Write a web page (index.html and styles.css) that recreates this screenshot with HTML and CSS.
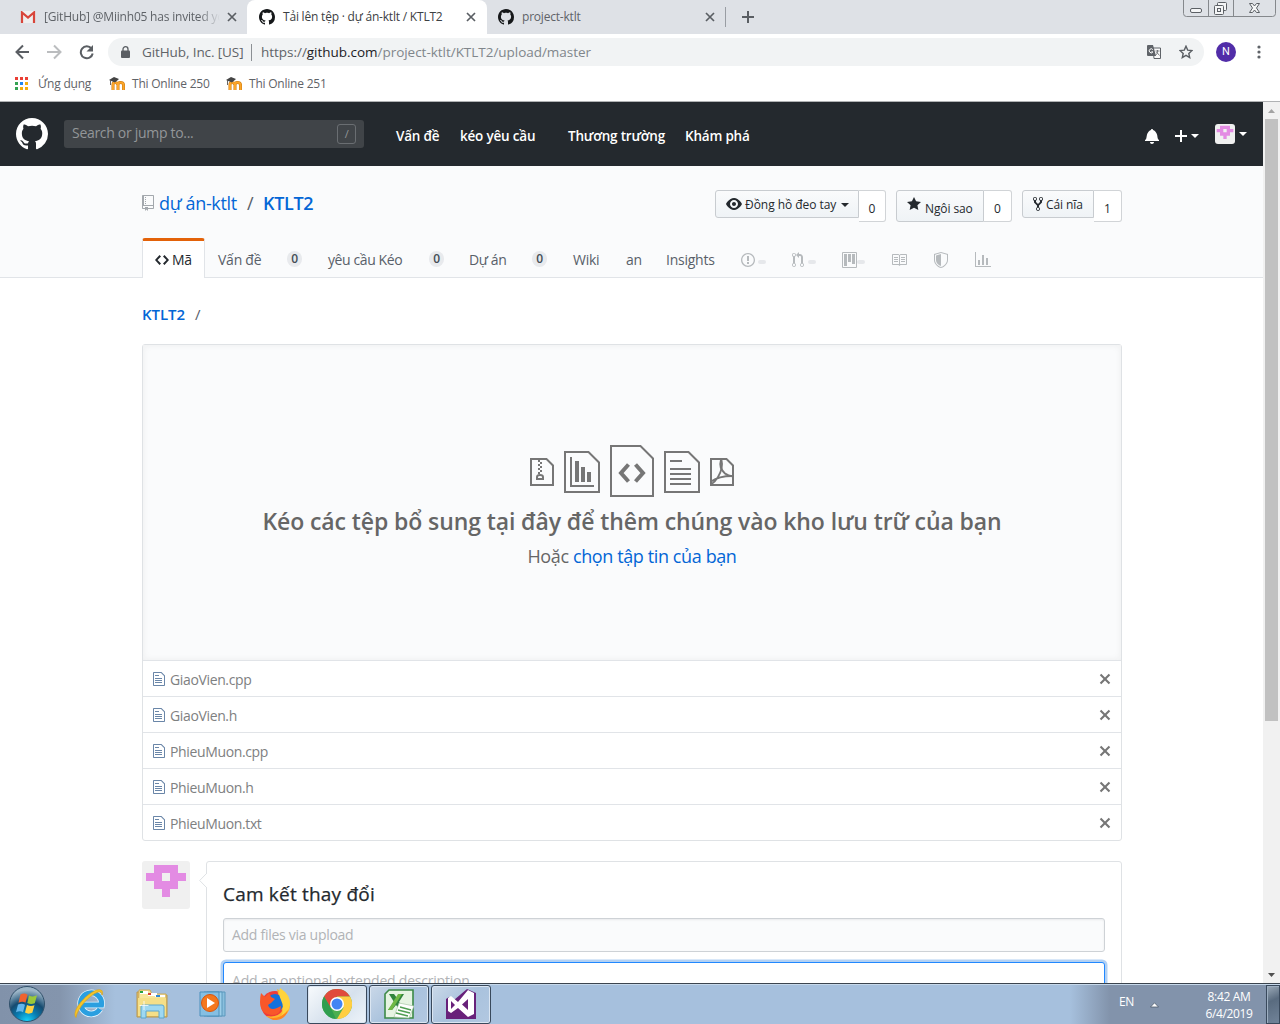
FILE: index.html
```html
<!DOCTYPE html>
<html lang="vi">
<head>
<meta charset="utf-8">
<title>Tải lên tệp · dự án-ktlt / KTLT2</title>
<link rel="stylesheet" href="styles.css">
</head>
<body>
<svg class="defs" width="0" height="0">
  <symbol id="mark" viewBox="0 0 16 16"><path d="M8 0C3.58 0 0 3.58 0 8c0 3.54 2.29 6.53 5.47 7.59.4.07.55-.17.55-.38 0-.19-.01-.82-.01-1.49-2.01.37-2.53-.49-2.69-.94-.09-.23-.48-.94-.82-1.13-.28-.15-.68-.52-.01-.53.63-.01 1.08.58 1.23.82.72 1.21 1.87.87 2.33.66.07-.52.28-.87.51-1.07-1.78-.2-3.64-.89-3.64-3.95 0-.87.31-1.59.82-2.15-.08-.2-.36-1.02.08-2.12 0 0 .67-.21 2.2.82.64-.18 1.32-.27 2-.27.68 0 1.36.09 2 .27 1.53-1.04 2.2-.82 2.2-.82.44 1.1.16 1.92.08 2.12.51.56.82 1.27.82 2.15 0 3.07-1.87 3.75-3.65 3.95.29.25.54.73.54 1.48 0 1.07-.01 1.93-.01 2.2 0 .21.15.46.55.38A8.013 8.013 0 0 0 16 8c0-4.42-3.58-8-8-8z"/></symbol>
  <symbol id="close" viewBox="0 0 10 10"><path d="M1 1l8 8M9 1L1 9" fill="none" stroke="currentColor" stroke-width="1.7"/></symbol>
  <symbol id="moodle" viewBox="0 0 16 14"><path d="M4 13V7.500q0-2 2-2t3 2V13M9 13V7.500q0-2 2.500-2t3 2V13" fill="none" stroke="#c9780f" stroke-width="3"/><path d="M4 13V7.500q0-2 2-2t3 2V13M9 13V7.500q0-2 2.500-2t3 2V13" fill="none" stroke="#fba52a" stroke-width="2"/><path d="M0 3l5-3 5 2-4 3.500-2-.8z" fill="#444"/><path d="M1.500 3v5" stroke="#555" stroke-width=".9"/></symbol>
  <symbol id="file" viewBox="0 0 12 16"><path d="M6 5H2V4h4v1zM2 8h7V7H2v1zm0 2h7V9H2v1zm0 2h7v-1H2v1zm10-7.500V14c0 .55-.45 1-1 1H1c-.55 0-1-.45-1-1V2c0-.55.45-1 1-1h7.500L12 4.500zM11 5L8 2H1v12h10V5z"/></symbol>
  <symbol id="cross" viewBox="0 0 12 16"><path d="M7.480 8l3.750 3.750-1.480 1.480L6 9.480l-3.750 3.750-1.480-1.480L4.520 8 .77 4.250l1.480-1.480L6 6.520l3.750-3.750 1.480 1.480L7.480 8z"/></symbol>
  <symbol id="identicon" viewBox="0 0 48 48"><path fill="#f0f0f0" d="M0 0h48v48H0z"/><path fill="#e38be3" fill-rule="evenodd" d="M12 4h24v8h8v8h-8v8h-8v8h-8v-8h-8v-8H4v-8h8zM20 12v8h8v-8z"/></symbol>
</svg>

<div class="tabstrip">
  <div class="tab tab-first">
    <svg class="gmail" width="16" height="12" viewBox="0 0 16 12"><path fill="#eee" d="M1 0h14v12H1z"/><path d="M2 12V1.500L8 6.500l6-5V12" fill="none" stroke="#d8453a" stroke-width="2.200"/></svg>
    <span class="tab-title faded">[GitHub] @Miinh05 has invited yo</span>
    <svg class="x" width="10" height="10"><use href="#close"/></svg>
  </div>
  <div class="tab tab-active">
    <svg width="16" height="16"><use href="#mark"/></svg>
    <span class="tab-title">Tải lên tệp · dự án-ktlt / KTLT2</span>
    <svg class="x" width="10" height="10"><use href="#close"/></svg>
  </div>
  <div class="tab tab-last">
    <svg width="16" height="16"><use href="#mark"/></svg>
    <span class="tab-title">project-ktlt</span>
    <svg class="x" width="10" height="10"><use href="#close"/></svg>
  </div>
  <svg class="newtab" width="12" height="12" viewBox="0 0 12 12"><path d="M6 0v12M0 6h12" stroke="#5a5e63" stroke-width="2"/></svg>
  <svg class="winctl" width="94" height="18" viewBox="0 0 94 18"><path d="M.5 0v13.500q0 3 3 3h86q3 0 3-3V0M25.500 0v16M50.500 0v16" fill="none" stroke="#85888c"/><g fill="#f4f5f6" stroke="#5c6065"><rect x="7.500" y="8.500" width="11" height="4" rx="1.500"/><rect x="34.500" y="2.500" width="9" height="8" rx="1"/><rect x="31.500" y="5.500" width="9" height="9" rx="1"/><rect x="34.500" y="8.500" width="3" height="3"/><path d="M66.500 3.500h3l2 2.500 2-2.500h3L73.500 8l3 4.500h-3l-2-2.500-2 2.500h-3l3-4.500z"/></g></svg>
</div>

<div class="toolbar">
  <svg class="nav-icons" width="80" height="16" viewBox="0 0 80 16"><g fill="none" stroke-width="2"><path d="M14 8H2M8 1.500L1.500 8 8 14.500" stroke="#5a5e63"/><path d="M32 8h13M39 1.500L45.500 8 39 14.500" stroke="#bbbdbf"/><path d="M76.500 4.500a6 6 0 1 0 1.200 5" stroke="#5a5e63"/></g><path d="M78 1v6.500h-6.500z" fill="#5a5e63"/></svg>
  <div class="omnibox">
    <svg class="lock" width="9" height="12" viewBox="0 0 9 12"><rect y="4.500" width="9" height="7.500" rx="1" fill="#5a5e63"/><path d="M2 5V3.200a2.500 2.500 0 0 1 5 0V5" fill="none" stroke="#5a5e63" stroke-width="1.300"/></svg>
    <span class="origin">GitHub, Inc. [US]</span>
    <span class="url"><i>https://</i><b>github.com</b>/project-ktlt/KTLT2/upload/master</span>
    <svg class="translate" width="14" height="14" viewBox="0 0 14 14"><path d="M6 3h7.500v10.500H7z" fill="#f8f8f8" stroke="#5f6368"/><path d="M1 0h5l3 11H1q-1 0-1-1V1q0-1 1-1z" fill="#5f6368"/><path d="M5.800 4.600a2 2 0 1 0 .1 2.300H4.300" stroke="#fff" fill="none"/><path d="M8.500 6h4M10.500 5v1q0 3-2 4.500M9.500 7l3 3.500" stroke="#5f6368" stroke-width=".8" fill="none"/></svg>
    <svg class="bookmark" width="14" height="14" viewBox="0 0 14 14"><path d="M7 1.200l1.700 3.900 4.300.4-3.200 2.900.9 4.200L7 10.400l-3.700 2.200.9-4.200L1 5.500l4.300-.4z" fill="none" stroke="#5a5e63" stroke-width="1.400"/></svg>
  </div>
  <span class="profile">N</span>
  <svg class="kebab" width="4" height="14" viewBox="0 0 4 14" fill="#5a5e63"><circle cx="2" cy="2" r="1.600"/><circle cx="2" cy="7" r="1.600"/><circle cx="2" cy="12" r="1.600"/></svg>
</div>

<div class="bookmarks">
  <svg width="13" height="13" viewBox="0 0 13 13"><path fill="#ea3f35" d="M0 0h3v3H0zM5 0h3v3H5zM10 0h3v3h-3z"/><path fill="#35a253" d="M0 5h3v3H0zM0 10h3v3H0z"/><path fill="#1f87f0" d="M5 5h3v3H5z"/><path fill="#f4ae0b" d="M10 5h3v3h-3zM5 10h3v3H5zM10 10h3v3h-3z"/></svg>
  <span class="bm-apps">Ứng dụng</span>
  <svg width="16" height="14"><use href="#moodle"/></svg>
  <span class="bm-link">Thi Online 250</span>
  <svg width="16" height="14"><use href="#moodle"/></svg>
  <span class="bm-link">Thi Online 251</span>
</div>

<div class="viewport">
  <div class="page">
    <header class="gh-header">
      <svg width="32" height="32" fill="#fff"><use href="#mark"/></svg>
      <div class="search"><span>Search or jump to...</span><kbd>/</kbd></div>
      <nav><a class="n1">Vấn đề</a><a class="n2">kéo yêu cầu</a><a class="n3">Thương trường</a><a class="n4">Khám phá</a></nav>
      <div class="header-right">
        <svg class="bell" width="14" height="16" viewBox="0 0 14 16"><path d="M14 12v1H0v-1l.73-.58c.77-.77.81-2.550 1.190-4.420C2.690 3.230 6 2 6 2c0-.55.45-1 1-1s1 .45 1 1c0 0 3.390 1.230 4.160 5 .38 1.880.42 3.660 1.190 4.420l.66.58H14zm-7 4c1.110 0 2-.89 2-2H5c0 1.110.89 2 2 2z"/></svg>
        <svg class="plus" width="12" height="16" viewBox="0 0 12 16"><path d="M12 9H7v5H5V9H0V7h5V2h2v5h5v2z"/></svg>
        <i class="caret low"></i>
        <svg class="me" width="20" height="20"><use href="#identicon"/></svg>
        <i class="caret"></i>
      </div>
    </header>

    <section class="repohead">
      <div class="repo-row">
        <h1>
          <svg class="repo" width="12" height="16" viewBox="0 0 12 16"><path d="M4 9H3V8h1v1zm0-3H3v1h1V6zm0-2H3v1h1V4zm0-2H3v1h1V2zm8-1v12c0 .55-.45 1-1 1H6v2l-1.500-1.500L3 16v-2H1c-.55 0-1-.45-1-1V1c0-.55.45-1 1-1h10c.55 0 1 .45 1 1zm-1 10H1v2h2v-1h3v1h5v-2zm0-10H2v9h9V1z"/></svg>
          <a class="owner">dự án-ktlt</a><span class="slash">/</span><a class="reponame">KTLT2</a>
        </h1>
        <div class="actions">
          <div class="action">
            <span class="btn watch"><svg width="16" height="16" viewBox="0 0 16 16"><path d="M8.060 2C3 2 0 8 0 8s3 6 8.060 6C13 14 16 8 16 8s-3-6-7.940-6zM8 12c-2.200 0-4-1.780-4-4 0-2.200 1.800-4 4-4 2.220 0 4 1.800 4 4 0 2.220-1.780 4-4 4zm2-4c0 1.110-.89 2-2 2-1.110 0-2-.89-2-2 0-1.110.89-2 2-2 1.110 0 2 .89 2 2z"/></svg><span>Đồng hồ đeo tay</span><i class="caret"></i></span><span class="count">0</span>
          </div>
          <div class="action">
            <span class="btn star"><svg width="14" height="16" viewBox="0 0 14 16"><path d="M14 6l-4.900-.64L7 1 4.900 5.360 0 6l3.600 3.260L2.670 14 7 11.670 11.330 14l-.93-4.740L14 6z"/></svg><span>Ngôi sao</span></span><span class="count">0</span>
          </div>
          <div class="action">
            <span class="btn fork"><svg width="10" height="16" viewBox="0 0 10 16"><path d="M8 1a1.993 1.993 0 0 0-1 3.720V6L5 8 3 6V4.720A1.993 1.993 0 0 0 2 1a1.993 1.993 0 0 0-1 3.720V6.500l3 3v1.780A1.993 1.993 0 0 0 5 15a1.993 1.993 0 0 0 1-3.720V9.500l3-3V4.720A1.993 1.993 0 0 0 8 1zM2 4.200C1.340 4.200.8 3.650.8 3c0-.65.55-1.200 1.200-1.200.65 0 1.200.55 1.200 1.200 0 .65-.55 1.200-1.200 1.200zm3 10c-.66 0-1.200-.55-1.200-1.200 0-.65.55-1.200 1.200-1.200.65 0 1.200.55 1.200 1.200 0 .65-.55 1.200-1.200 1.200zm3-10c-.66 0-1.200-.55-1.200-1.200 0-.65.55-1.200 1.200-1.200.65 0 1.200.55 1.200 1.200 0 .65-.55 1.200-1.200 1.200z"/></svg><span>Cái nĩa</span></span><span class="count">1</span>
          </div>
        </div>
      </div>
      <nav class="reponav">
        <a class="selected"><svg width="14" height="16" viewBox="0 0 14 16"><path d="M9.500 3L8 4.500 11.500 8 8 11.500 9.500 13 14 8 9.500 3zm-5 0L0 8l4.500 5L6 11.500 2.500 8 6 4.500 4.500 3z"/></svg><span>Mã</span></a>
        <a class="r1">Vấn đề</a><span class="counter c1">0</span>
        <a class="r2">yêu cầu Kéo</a><span class="counter c2">0</span>
        <a class="r3">Dự án</a><span class="counter c3">0</span>
        <a class="r4">Wiki</a><a class="r5">an</a><a class="r6">Insights</a>
        <span class="ghost g1"><svg width="14" height="16" viewBox="0 0 14 16"><path d="M7 2.300c3.140 0 5.700 2.560 5.700 5.700s-2.560 5.700-5.700 5.700A5.710 5.710 0 0 1 1.300 8c0-3.140 2.560-5.700 5.700-5.700zM7 1C3.140 1 0 4.140 0 8s3.140 7 7 7 7-3.140 7-7-3.140-7-7-7zm1 3H6v5h2V4zm0 6H6v2h2v-2z"/></svg><i></i></span>
        <span class="ghost g2"><svg width="12" height="16" viewBox="0 0 12 16"><path d="M11 11.280V5c-.03-.78-.34-1.470-.94-2.060C9.460 2.350 8.780 2.030 8 2H7V0L4 3l3 3V4h1c.27.02.48.11.69.31.21.2.3.42.31.69v6.280A1.993 1.993 0 0 0 10 15a1.993 1.993 0 0 0 1-3.720zm-1 2.920c-.66 0-1.200-.55-1.200-1.200 0-.65.55-1.200 1.200-1.200.65 0 1.200.55 1.200 1.200 0 .65-.55 1.200-1.200 1.200zM4 3c0-1.110-.89-2-2-2a1.993 1.993 0 0 0-1 3.720v6.560A1.993 1.993 0 0 0 2 15a1.993 1.993 0 0 0 1-3.720V4.720c.59-.34 1-.98 1-1.720zm-.8 10c0 .66-.55 1.200-1.200 1.200-.65 0-1.200-.55-1.200-1.200 0-.65.55-1.200 1.200-1.200.65 0 1.200.55 1.200 1.200zM2 4.200C1.340 4.200.8 3.650.8 3c0-.65.55-1.200 1.200-1.200.65 0 1.200.55 1.200 1.200 0 .65-.55 1.200-1.200 1.200z"/></svg><i></i></span>
        <span class="ghost g3"><svg width="15" height="16" viewBox="0 0 15 16"><path fill-rule="evenodd" d="M10 12h3V2h-3v10zm-4-2h3V2H6v8zm-4 4h3V2H2v12zm-1 1h13V1H1v14zM14 0H1a1 1 0 0 0-1 1v14a1 1 0 0 0 1 1h13a1 1 0 0 0 1-1V1a1 1 0 0 0-1-1z"/></svg><i></i></span>
        <span class="ghost g4"><svg width="16" height="16" viewBox="0 0 16 16"><path d="M3 5h4v1H3V5zm0 3h4V7H3v1zm0 2h4V9H3v1zm11-5h-4v1h4V5zm0 2h-4v1h4V7zm0 2h-4v1h4V9zm2-6v9c0 .55-.45 1-1 1H9.500l-1 1-1-1H2c-.55 0-1-.45-1-1V3c0-.55.45-1 1-1h5.500l1 1 1-1H15c.55 0 1 .45 1 1zm-8 .5L7.500 3H2v9h6V3.500zm7-.5H9.500l-.5.5V12h6V3z"/></svg></span>
        <span class="ghost g5"><svg width="14" height="16" viewBox="0 0 14 16"><path fill-rule="evenodd" d="M0 2l7-2 7 2v6.020C14 12.690 8.690 16 7 16c-1.690 0-7-3.310-7-7.980V2zm1 .75L7 1l6 1.750v5.268C13 12.104 8.449 15 7 15c-1.449 0-6-2.896-6-6.982V2.750zm1 .75L7 2v12c-1.207 0-5-2.482-5-5.985V3.500z"/></svg></span>
        <span class="ghost g6"><svg width="16" height="16" viewBox="0 0 16 16"><path d="M16 14v1H0V0h1v14h15zM5 13H3V8h2v5zm4 0H7V3h2v10zm4 0h-2V6h2v7z"/></svg></span>
      </nav>
    </section>

    <main>
      <div class="breadcrumb"><a>KTLT2</a><span>/</span></div>
      <div class="upload">
        <div class="dropzone">
          <div class="file-icons">
            <svg width="24" height="28" viewBox="0 1 24 28"><path d="M1 2h15.500L23 8.500V28H1z" fill="none" stroke="#767676" stroke-width="2"/><path fill="#767676" d="M8 3h2v2H8zM10 5h2v2h-2zM8 7h2v2H8zM10 9h2v2h-2zM8 11h2v2H8zM10 13h2v2h-2zM8 15h2v2H8z"/><path d="M7 22v-2q0-2 3-2t3 2v2z" fill="none" stroke="#767676" stroke-width="2"/></svg>
            <svg width="36" height="42" viewBox="0 0 36 42"><path d="M1 1h23.500L35 11.500V41H1zM7 6v29h23" fill="none" stroke="#767676" stroke-width="2"/><path fill="#767676" d="M11 10h4v21h-4zM17 16h4v15h-4zM23 21h4v10h-4z"/></svg>
            <svg class="big" width="44" height="52" viewBox="0 0 44 52"><path d="M1 1h29.500L43 13.500V51H1z" fill="none" stroke="#767676" stroke-width="2"/><path d="M18.500 19.500L11 28l7.500 8.500M25.500 19.500L33 28l-7.500 8.500" fill="none" stroke="#767676" stroke-width="4"/></svg>
            <svg width="36" height="42" viewBox="0 0 36 42"><path d="M1 1h23.500L35 11.500V41H1zM6 10h12M6 18h21M6 23h21M6 28h21M6 33h21" fill="none" stroke="#767676" stroke-width="2"/></svg>
            <svg width="24" height="28" viewBox="0 1 24 28"><g fill="none" stroke="#767676" stroke-width="2"><path d="M1 2h15.500L23 8.500V28H1z"/><path d="M11 3c-1.500 5 0 10 4 13.500q3 2.500 8 3" stroke-width="2"/><path d="M11.500 3c1.500 6-.5 12-3.500 17q-3 5-7 7.500M1 24.500q8-5.500 21-5.500" stroke-width="1.800"/></g></svg>
          </div>
          <h2>Kéo các tệp bổ sung tại đây để thêm chúng vào kho lưu trữ của bạn</h2>
          <p>Hoặc <a>chọn tập tin của bạn</a></p>
        </div>
        <div class="row"><svg width="12" height="16"><use href="#file"/></svg><span>GiaoVien.cpp</span><svg class="remove" width="12" height="16"><use href="#cross"/></svg></div>
        <div class="row"><svg width="12" height="16"><use href="#file"/></svg><span>GiaoVien.h</span><svg class="remove" width="12" height="16"><use href="#cross"/></svg></div>
        <div class="row"><svg width="12" height="16"><use href="#file"/></svg><span>PhieuMuon.cpp</span><svg class="remove" width="12" height="16"><use href="#cross"/></svg></div>
        <div class="row"><svg width="12" height="16"><use href="#file"/></svg><span>PhieuMuon.h</span><svg class="remove" width="12" height="16"><use href="#cross"/></svg></div>
        <div class="row"><svg width="12" height="16"><use href="#file"/></svg><span>PhieuMuon.txt</span><svg class="remove" width="12" height="16"><use href="#cross"/></svg></div>
      </div>
      <div class="commit">
        <svg class="avatar" width="48" height="48"><use href="#identicon"/></svg>
        <div class="commit-box">
          <svg class="pointer" width="8" height="16" viewBox="0 0 8 16"><path d="M8 0L.7 7.500 8 15" fill="#fff" stroke="#dfe2e5"/></svg>
          <h3>Cam kết thay đổi</h3>
          <div class="field">Add files via upload</div>
          <div class="field focused">Add an optional extended description...</div>
        </div>
      </div>
    </main>
  </div>
  <div class="scrollbar">
    <svg width="7" height="4" viewBox="0 0 7 4"><path d="M0 4l3.500-4L7 4z" fill="#a3a3a3"/></svg>
    <div class="thumb"></div>
    <svg class="down" width="7" height="4" viewBox="0 0 7 4"><path d="M0 0h7L3.500 4z" fill="#505050"/></svg>
  </div>
</div>

<footer class="taskbar">
  <div class="launch">
    <svg width="38" height="38" viewBox="0 0 38 38"><defs><radialGradient id="orb" cx=".5" cy="1" r=".9"><stop offset="0" stop-color="#18d8ff"/><stop offset=".35" stop-color="#087db2"/><stop offset=".65" stop-color="#164b70"/><stop offset="1" stop-color="#9db6c8"/></radialGradient></defs><circle cx="19" cy="19" r="17.500" fill="url(#orb)" stroke="#31516b"/><path d="M12.500 9.500q4-2 7 .2l-2 8q-3-1.700-7 0z" fill="#ef6330"/><path d="M21 10.500q4 2 8-.2l-2.200 8q-4 1.700-7.500-.3z" fill="#9ac83a"/><path d="M10 19.500q4-1.800 7 .2l-2 7.500q-3-1.800-7 0z" fill="#62b6ec"/><path d="M19 20q3.500 2 7.500.3l-2.200 7.500q-4 1.800-7.300-.3z" fill="#ffd144"/></svg>
  </div>
  <div class="launch ie">
    <svg width="32" height="32" viewBox="0 0 32 32"><path d="M27 21a10.500 10.500 0 1 1 1.500-4H10" fill="none" stroke="#e8f6ff" stroke-width="6.500"/><path d="M27 21a10.500 10.500 0 1 1 1.500-4H10" fill="none" stroke="#2b9fe0" stroke-width="5"/><path d="M3 29.500C-2 24 12 6 24 2q7-1.500 5 5 0-4-4-3C16 7 4 21 3 29.500z" fill="#f5c52c" stroke="#e2a50d" stroke-width=".7"/></svg>
  </div>
  <div class="launch">
    <svg width="32" height="32" viewBox="0 0 32 32"><path d="M1 4h9l2 3h19v22H1z" fill="#e6c56a" stroke="#b9964a"/><path d="M3 2h11l2 4h14v22H2z" fill="#f7e59a" stroke="#cba95b"/><path fill="#fff" d="M4 3h8v3H4zM12 5h9v3h-9zM19 7h10v2H19z"/><path d="M4 3h3v2H4z" fill="#25a341"/><path d="M12 5h3v2h-3z" fill="#d8422f"/><path d="M20 7h4v2h-4z" fill="#3189d5"/><path d="M2 10h28v18H2z" fill="#f5df88"/><path d="M5 30V19q0-2 2-2h19q2 0 2 2v11h-5v-7H10v7z" fill="#9ed8f1" stroke="#5ba6cf"/><path d="M8 13v9M3.500 17.500h9" stroke="#fff" stroke-width=".8"/></svg>
  </div>
  <div class="launch">
    <svg width="30" height="28" viewBox="0 0 30 28"><path d="M8 2h18v24H8z" fill="#8abfdd" stroke="#5a98bd"/><path d="M5 2h18v24H5z" fill="#9dcfea" stroke="#5a98bd"/><path d="M1 2h19v24H1z" fill="#85bfe2" stroke="#4b90bc"/><circle cx="11" cy="13" r="8.500" fill="#f4771d" stroke="#d8550d"/><path d="M8 8l8 5-8 5z" fill="#fff"/></svg>
  </div>
  <div class="launch">
    <svg width="32" height="32" viewBox="0 0 32 32"><circle cx="16" cy="17" r="14" fill="#ef3d38"/><path d="M18 1q13 6 13 17A15 14 0 0 1 7 28q12 2 16-5z" fill="#ffb52c"/><circle cx="16" cy="15" r="9" fill="#1271dc"/><path d="M2 5l4 4 4-4 2 4 4 2-4 4-3 2q2 6 9 3l4-2q0 9-9 9Q1 26 1 14q0-5 1-9z" fill="#f9572a"/><path d="M21 0q11 7 10 17-2 9-9 12 4-9 0-17-3-6-1-12z" fill="#ffd33c"/><path d="M8 29q12 4 21-7-3 11-15 10z" fill="#ff8622"/></svg>
  </div>
  <div class="launch window current">
    <svg width="30" height="30" viewBox="0 0 30 30"><circle cx="15" cy="15" r="15" fill="#4caf50"/><path d="M2 7.500A15 15 0 0 1 28 7.500H15l-6.500 11z" fill="#e04b3c"/><path d="M28 7.500A15 15 0 0 1 15 30l6.500-11.200L15 7.500z" fill="#ffce42"/><path d="M2 7.500L9 19l5 11A15 15 0 0 1 2 7.500z" fill="#2f9e4f"/><circle cx="15" cy="15" r="7" fill="#fff"/><circle cx="15" cy="15" r="5.500" fill="#4285f4"/></svg>
  </div>
  <div class="launch window">
    <svg width="30" height="30" viewBox="0 0 30 30"><path d="M5 1h24v28H1V5z" fill="#e6f4e2" stroke="#3d8a47" stroke-width="1.600"/><path d="M5 5h5l3 4 3-4h4l-5 8 6 8h-5l-4-5-4 5H4l6-8z" fill="#31853c"/><path d="M8 21L18 5h-4L4 21z" fill="#70b844"/><path d="M15 14l15 3-5 12-15-1z" fill="#fff" stroke="#9cbf9a" stroke-width=".6"/><path d="M16 18l11 3M14 21l12 3M12 24l12 3" stroke="#4f9e52" stroke-width="1.300"/></svg>
  </div>
  <div class="launch window">
    <svg width="30" height="30" viewBox="0 0 30 30"><path fill="#68217a" d="M0 10l3-2 5 3L21 0l9 4v26H0z"/><path fill="#fff" fill-rule="evenodd" d="M22 1l6 3v21l-6 3-10-9-7 5-3-2V9l3-2 7 6zM22 10l-6 5.500 6 5.500zM5 12v8l4-4z"/></svg>
  </div>
  <div class="tray">
    <span class="lang">EN</span>
    <svg class="up" width="9" height="6" viewBox="0 0 9 6"><path d="M.5 5L4.500.8 8.500 5z" fill="#fff" stroke="#4a5869" stroke-width=".8"/></svg>
    <div class="clock"><span>8:42 AM</span><span>6/4/2019</span></div>
    <div class="peek"></div>
  </div>
</footer>
</body>
</html>
```

FILE: styles.css
```css
* { box-sizing: border-box; }
body {
  margin: 0;
  width: 1280px;
  height: 1024px;
  overflow: hidden;
  display: flex;
  flex-direction: column;
  font-family: "Open Sans", "Noto Sans", sans-serif;
  font-size: 14px;
  color: #24292e;
  background: #fff;
  white-space: nowrap;
}
svg { display: block; flex: none; fill: currentColor; }
.defs { position: absolute; }
h1, h2, h3, p { margin: 0; font-weight: 400; }
i, b { font-style: normal; font-weight: 400; }

/* browser tabs */
.tabstrip { height: 34px; flex: none; display: flex; background: #dee1e6; font-size: 12px; letter-spacing: -.2px; color: #5f6368; }
.tab { height: 34px; display: flex; align-items: center; }
.tab svg:first-child { color: #16181a; }
.tab .x { color: #5a5e63; margin-left: auto; }
.tab-title { line-height: 20px; }
.tab-first { width: 247px; padding: 0 10px 0 20px; }
.tab-first .tab-title { margin-left: 8px; width: 176px; }
.faded { -webkit-mask-image: linear-gradient(90deg, #000 88%, transparent); mask-image: linear-gradient(90deg, #000 88%, transparent); }
.tab-active { width: 240px; padding: 0 11px 0 12px; background: #fff; color: #3c4043; border-radius: 8px 8px 0 0; }
.tab-active .tab-title, .tab-last .tab-title { margin-left: 8px; }
.tab-last { position: relative; width: 239px; padding: 0 11px; }
.tab-last::after { content: ""; position: absolute; right: 0; top: 7px; width: 1px; height: 20px; background: #999da3; }
.newtab { margin: 11px 0 0 16px; }
.winctl { margin-left: auto; margin-right: 3px; }

/* address bar */
.toolbar { height: 36px; flex: none; display: flex; align-items: center; background: #fff; color: #5f6368; }
.nav-icons { margin-left: 15px; }
.omnibox { width: 1096px; height: 28px; margin-left: 13px; border-radius: 14px; background: #f1f3f4; display: flex; align-items: center; padding: 0 14px; letter-spacing: -.1px; }
.lock { margin-left: -1px; }
.origin { margin-left: 12px; width: 110px; height: 17px; line-height: 16px; border-right: 1px solid #8c9094; font-size: 13.500px; }
.url { margin-left: 9px; color: #80868b; font-size: 13.500px; letter-spacing: -.03px; }
.url i { color: #5f6368; }
.url b { color: #202124; }
.translate { margin-left: auto; }
.bookmark { margin: 0 -3px 0 18px; }
.profile { width: 20px; height: 20px; margin-left: 12px; border-radius: 50%; background: #512da8; color: #fff; font: 11px/20px Roboto, sans-serif; text-align: center; }
.kebab { margin-left: 21px; }

.bookmarks { height: 32px; flex: none; display: flex; align-items: flex-start; padding: 7px 0 0 15px; border-bottom: 1px solid #b0b2b4; font-size: 12px; line-height: 14px; letter-spacing: -.22px; color: #5f6368; }
.bm-apps { width: 71px; margin-left: 10px; }
.bm-link { width: 94px; margin-left: 7px; }

/* page and scrollbar */
.viewport { height: 882px; flex: none; display: flex; overflow: hidden; }
.page { width: 1263px; overflow: hidden; }
.scrollbar { width: 17px; background: #f1f1f1; display: flex; flex-direction: column; align-items: center; padding: 7px 1px 7px 0; }
.thumb { width: 13px; height: 602px; margin-top: 6px; background: #c1c1c1; }
.down { margin-top: auto; }

.gh-header { height: 64px; background: #24292e; color: #fff; display: flex; align-items: center; padding: 0 16px; }
.search { width: 300px; height: 28px; margin-left: 16px; border-radius: 3px; background: #404448; display: flex; align-items: center; justify-content: space-between; padding: 0 8px 0 8px; color: #939699; letter-spacing: -.35px; }
.search span { line-height: 26px; padding-bottom: 2px; letter-spacing: -.3px; }
kbd { width: 19px; height: 20px; border: 1px solid #6a6e72; border-radius: 3px; font: 11px/18px "Open Sans", sans-serif; text-align: center; }
.gh-header nav { display: flex; margin-left: 32px; padding-top: 3px; font-size: 13.500px; font-weight: 600; letter-spacing: -.2px; }
.n1 { width: 64px; }
.n2 { width: 108px; }
.n3 { width: 117px; }
.header-right { margin-left: auto; display: flex; align-items: center; }
.caret { width: 0; height: 0; border: 4px solid transparent; border-top-color: currentColor; border-bottom: 0; }
.low { margin-top: 3px; }
.bell { margin: 4px 16px 0 0; }
.plus { margin: 4px 4px 0 0; }
.me { margin: 0 4px 0 16px; border-radius: 3px; }

.repohead { height: 112px; background: #fafbfc; border-bottom: 1px solid #e1e4e8; padding: 24px 141px 0 142px; }
.repo-row { display: flex; justify-content: space-between; height: 48px; }
h1 { display: flex; font-size: 18px; line-height: 26px; color: #0366d6; letter-spacing: -.35px; }
.repo { margin: 5px 5px 0 0; color: #a3a8ad; }
.owner { width: 88px; }
.slash { width: 16px; color: #586069; }
.reponame { font-weight: 600; }
.actions { display: flex; gap: 10px; font-size: 12px; line-height: 20px; letter-spacing: -.1px; }
.action { display: flex; align-items: flex-start; }
.btn { height: 28px; display: flex; padding: 3px 10px; border: 1px solid #c8ccd0; border-radius: 3px 0 0 3px; background: linear-gradient(#fafbfc, #eff3f6); }
.btn span { margin-left: 3px; line-height: 21px; }
.btn svg { margin-top: 2px; }
.watch { width: 144px; padding-right: 9px; }
.watch span { letter-spacing: -.05px; }
.watch .caret { margin: 9px 0 0 auto; }
.star { width: 88px; height: 32px; }
.star span { margin-top: 4px; margin-left: 4px; }
.fork { width: 72px; }
.count { height: 32px; width: 28px; border: 1px solid #d1d4d7; border-left: 0; border-radius: 0 3px 3px 0; background: #fff; text-align: center; line-height: 35px; }
.action:first-child .count { width: 27px; }

.reponav { display: flex; height: 40px; line-height: 43px; color: #586069; letter-spacing: -.25px; }
.reponav .selected { width: 63px; height: 40px; display: flex; padding: 0 0 0 12px; line-height: 37px; color: #24292e; background: #fff; border: 1px solid #e1e4e8; border-top: 3px solid #e36209; border-bottom: 0; border-radius: 3px 3px 0 0; letter-spacing: -.4px; }
.selected svg { margin: 11px 3px 0 0; }
.r1 { width: 69px; margin-left: 13px; }
.counter { height: 16px; width: 15px; margin-top: 13px; border-radius: 8px; background: #e8eaed; font-size: 12px; font-weight: 600; line-height: 16px; text-align: center; color: #444d56; }
.r2 { width: 101px; margin-left: 26px; }
.r2 { letter-spacing: -.4px; }
.r3 { width: 63px; margin-left: 25px; letter-spacing: -.4px; }
.r4 { width: 53px; margin-left: 26px; }
.r5 { width: 40px; }
.r6 { width: 75px; }
.ghost { display: flex; padding-top: 14px; color: #b6babd; }
.ghost i { width: 8px; height: 4px; margin: 8px 0 0 3px; border-radius: 2px; background: #e6e8eb; }
.g1 { width: 51px; }
.g2 { width: 50px; }
.g2 i { margin-left: 4px; }
.g3 { width: 49px; }
.g3 i { margin-left: 0; }
.g4 { width: 43px; }
.g5 { width: 41px; }

/* upload area */
main { width: 980px; margin-left: 142px; }
.breadcrumb { height: 66px; padding-top: 24px; line-height: 24px; font-size: 15px; letter-spacing: -.05px; color: #586069; }
.breadcrumb a { display: inline-block; width: 53px; font-weight: 600; color: #0366d6; }
.upload { border: 1px solid #dfe2e5; border-radius: 3px; height: 497px; }
.dropzone { height: 315px; background: #fafbfc; box-shadow: inset 0 0 7px rgba(27,31,35,.06); text-align: center; padding-top: 100px; color: #666; }
.file-icons { height: 54px; display: flex; justify-content: center; align-items: center; gap: 10px; }
.file-icons .big { margin-bottom: 2px; }
h2 { font-size: 23px; font-weight: 600; line-height: 36px; margin-top: 4px; letter-spacing: -.1px; }
.dropzone p { font-size: 18px; line-height: 24px; margin-top: 5px; letter-spacing: -.39px; }
.dropzone a { color: #0366d6; }
.row { height: 36px; display: flex; border-top: 1px solid #e1e4e8; padding: 10px 10px 0; line-height: 18px; color: #7e8081; letter-spacing: -.36px; }
.row > svg { color: #6a86a8; }
.row span { margin-left: 5px; }
.row .remove { margin-left: auto; color: #767676; }

/* commit form */
.commit { display: flex; margin-top: 20px; gap: 16px; }
.avatar { border-radius: 3px; }
.commit-box { position: relative; width: 916px; height: 240px; border: 1px solid #dfe2e5; border-radius: 3px; padding: 19px 16px; }
.pointer { position: absolute; left: -8px; top: 11px; }
h3 { font-size: 19px; font-weight: 500; line-height: 26px; letter-spacing: .2px; -webkit-text-stroke: .25px; }
.field { height: 34px; margin-top: 11px; border: 1px solid #ced2d6; border-radius: 3px; background: #fafbfc; padding: 0 8px; line-height: 32px; color: #b1b3b6; box-shadow: inset 0 1px 2px rgba(27,31,35,.075); letter-spacing: -.28px; }
.focused { height: 80px; margin-top: 10px; line-height: 35px; background: #fff; border-color: #2188ff; box-shadow: 0 0 0 2.500px rgba(3,102,214,.3); }
.focused { letter-spacing: -.22px; }

/* Windows taskbar */
.taskbar { height: 40px; flex: none; display: flex; padding-left: 7px; border-top: 1px solid #c7d9eb; box-shadow: 0 -1px #3b444e; position: relative; background: linear-gradient(90deg, #8192aa 0, #8495ad 60px, #a6c0dd 115px, #a6c0dd 1070px, #8293ab 1110px); }
.launch { width: 60px; margin-right: 2px; padding-bottom: 1px; display: flex; align-items: center; justify-content: center; }
.launch:first-child { width: 40px; margin-right: 13px; }
.launch:nth-child(5) { margin-right: 1px; padding-right: 2px; }
.ie { padding-right: 3px; }
.window { border: 1px solid #39495c; border-radius: 3px; box-shadow: inset 0 0 0 1px #dbe6f2; background: linear-gradient(135deg, #cad8e8, #a9c2dd 50%, #b2c8e1); }
.current { background: linear-gradient(135deg, #f8fbfd, #d6e1ed 55%, #eef4fa); }
.tray { margin-left: auto; display: flex; color: #fff; font-size: 12px; letter-spacing: -.35px; }
.lang { width: 31px; padding-top: 8px; line-height: 18px; }
.up { margin-top: 17px; }
.clock { width: 64px; margin: 3px 5px 0 38px; display: flex; flex-direction: column; align-items: center; line-height: 17px; }
.peek { width: 14px; border: 1px solid #39495c; box-shadow: inset 1px 1px #9eafc1; background: linear-gradient(155deg, #9dabb9, #596b7f 40%, #718399); }
```
